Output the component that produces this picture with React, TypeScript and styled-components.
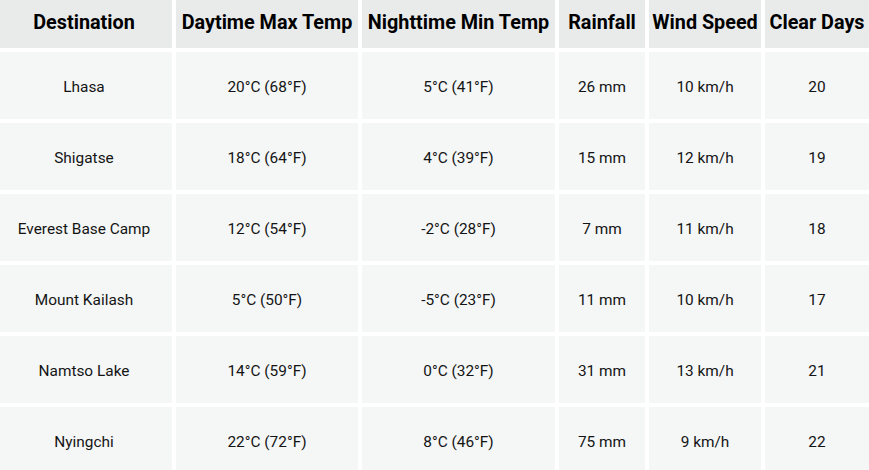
import React from "react";
import styled, { createGlobalStyle } from "styled-components";

const Global = createGlobalStyle`
  html, body { margin: 0; padding: 0; background: #ffffff; }
  body { font-family: Roboto, "Liberation Sans", Arial, sans-serif; overflow: hidden; }
`;

const Table = styled.div`
  display: grid;
  grid-template-columns: 172px 182px 193px 86px 112px 1fr;
  grid-template-rows: 48px;
  grid-auto-rows: 67px;
  gap: 4px;
  width: 869px;
`;

const HeadCell = styled.div<{ $first?: boolean }>`
  display: flex;
  align-items: center;
  justify-content: center;
  background: #e9ebeb;
  color: #000000;
  font-weight: 700;
  font-size: 19.8px;
  white-space: nowrap;
  padding-bottom: 4px;
  padding-right: ${(p) => (p.$first ? "4px" : "0")};
  box-sizing: border-box;
`;

const Cell = styled.div<{ $first?: boolean }>`
  display: flex;
  align-items: center;
  justify-content: center;
  background: #f5f7f7;
  color: #141414;
  font-size: 15.4px;
  white-space: nowrap;
  padding-top: 2px;
  padding-right: ${(p) => (p.$first ? "4px" : "0")};
  box-sizing: border-box;
`;

const headers = [
  "Destination",
  "Daytime Max Temp",
  "Nighttime Min Temp",
  "Rainfall",
  "Wind Speed",
  "Clear Days",
];

const rows = [
  ["Lhasa", "20°C (68°F)", "5°C (41°F)", "26 mm", "10 km/h", "20"],
  ["Shigatse", "18°C (64°F)", "4°C (39°F)", "15 mm", "12 km/h", "19"],
  ["Everest Base Camp", "12°C (54°F)", "-2°C (28°F)", "7 mm", "11 km/h", "18"],
  ["Mount Kailash", "5°C (50°F)", "-5°C (23°F)", "11 mm", "10 km/h", "17"],
  ["Namtso Lake", "14°C (59°F)", "0°C (32°F)", "31 mm", "13 km/h", "21"],
  ["Nyingchi", "22°C (72°F)", "8°C (46°F)", "75 mm", "9 km/h", "22"],
];

export default function App() {
  return (
    <>
      <Global />
      <Table>
        {headers.map((h, i) => (
          <HeadCell key={h} $first={i === 0}>
            {h}
          </HeadCell>
        ))}
        {rows.map((r) =>
          r.map((c, i) => (
            <Cell key={r[0] + i} $first={i === 0}>
              {c}
            </Cell>
          ))
        )}
      </Table>
    </>
  );
}
